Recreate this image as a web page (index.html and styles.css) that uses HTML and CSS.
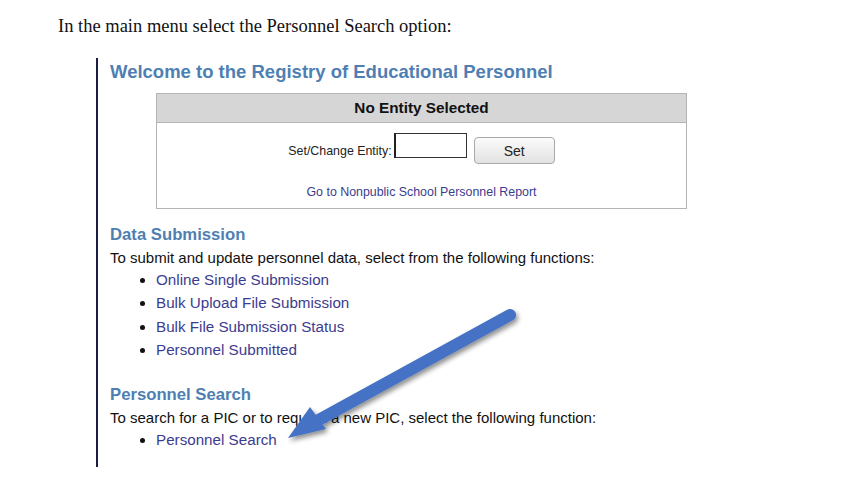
FILE: index.html
```html
<html>
<head>
    <link rel="stylesheet" href="styles.css">
</head>
<body>
    <p class="intro">In the main menu select the Personnel Search option:</p>
    <div class="shot">
        <h1 class="title">Welcome to the Registry of Educational Personnel</h1>
        <table class="entity">
            <tr>
                <th>No Entity Selected</th>
            </tr>
            <tr>
                <td>
                    <form class="setrow" onsubmit="event.preventDefault();">
                        <label>Set/Change Entity:</label>
                        <input type="text" class="code">
                        <input type="submit" value="Set" class="setbtn">
                    </form>
                    <a class="report">Go to Nonpublic School Personnel Report</a>
                </td>
            </tr>
        </table>

        <h2 class="section first">Data Submission</h2>
        <p class="lead">To submit and update personnel data, select from the following functions:</p>
        <ul class="links">
            <li><a>Online Single Submission</a></li>
            <li><a>Bulk Upload File Submission</a></li>
            <li><a>Bulk File Submission Status</a></li>
            <li><a>Personnel Submitted</a></li>
        </ul>

        <h2 class="section">Personnel Search</h2>
        <p class="lead">To search for a PIC or to request a new PIC, select the following function:</p>
        <ul class="links">
            <li><a>Personnel Search</a></li>
        </ul>

        <svg class="arrow" width="260" height="160" viewBox="0 0 260 160">
            <defs>
                <filter id="sh" x="-20%" y="-20%" width="140%" height="140%">
                    <feGaussianBlur in="SourceAlpha" stdDeviation="2.5"/>
                    <feOffset dx="2" dy="3" result="b"/>
                    <feComponentTransfer><feFuncA type="linear" slope="0.45"/></feComponentTransfer>
                    <feMerge><feMergeNode/><feMergeNode in="SourceGraphic"/></feMerge>
                </filter>
            </defs>
            <g filter="url(#sh)">
                <line x1="240" y1="15" x2="45" y2="122" stroke="#4472c4" stroke-width="12" stroke-linecap="round"/>
                <polygon points="18,138 40,107 56,129" fill="#4472c4"/>
            </g>
        </svg>
    </div>
</body>
</html>
```

FILE: styles.css
```css
body{
    margin: 0;
    padding: 0;
    background: #fff;
    font-family: "Liberation Sans", Arial, sans-serif;
}
.intro{
    margin: 0;
    padding: 16px 0 0 58px;
    font-family: "Liberation Serif", "Times New Roman", serif;
    font-size: 18.5px;
    line-height: 21px;
    color: #111;
}
.shot{
    position: relative;
    margin: 21px 0 0 96px;
    width: 600px;
    border-left: 2px solid #1c1c48;
    padding: 0 0 16px 12px;
}
.title{
    margin: 0;
    padding-top: 3px;
    font-size: 18.5px;
    line-height: 22px;
    color: #4f7fb2;
}
.entity{
    margin: 10px 0 0 46px;
    width: 531px;
    border: 1px solid #b4b4b4;
    border-collapse: collapse;
    font-size: 12.4px;
    color: #222;
}
.entity th{
    height: 29px;
    padding: 0;
    background: #d6d6d6;
    border-bottom: 1px solid #b4b4b4;
    font-size: 15.3px;
    color: #111;
}
.entity td{
    padding: 10px 0 9px;
    text-align: center;
}
.setrow{
    margin: 0;
    display: flex;
    justify-content: center;
    align-items: flex-start;
}
.setrow label{
    margin-top: 11px;
    line-height: 14px;
}
.code{
    width: 73px;
    height: 25px;
    margin: 0 0 0 2px;
    box-sizing: border-box;
    border: 1px solid #333;
    border-left: 2px solid #222;
}
.setbtn{
    width: 81px;
    height: 27px;
    margin: 4px 0 0 7px;
    border: 1px solid #aaa;
    border-radius: 4px;
    background: linear-gradient(#fbfbfb, #e2e2e2);
    font-family: "Liberation Sans", Arial, sans-serif;
    font-size: 14px;
    color: #222;
}
.report{
    display: block;
    margin-top: 21px;
    line-height: 14px;
    color: #3c3c8e;
}
.section{
    margin: 23px 0 0;
    font-size: 16.7px;
    line-height: 19px;
    color: #4f7fb2;
}
.section.first{
    margin-top: 16px;
}
.lead{
    margin: 4px 0 0;
    font-size: 15px;
    line-height: 19px;
    color: #111;
}
.links{
    margin: 1px 0 0;
    padding-left: 46px;
    font-size: 15.2px;
    line-height: 23.4px;
    color: #111;
}
.links a{
    color: #3c3c8e;
}
.arrow{
    position: absolute;
    left: 172px;
    top: 242px;
}
```
